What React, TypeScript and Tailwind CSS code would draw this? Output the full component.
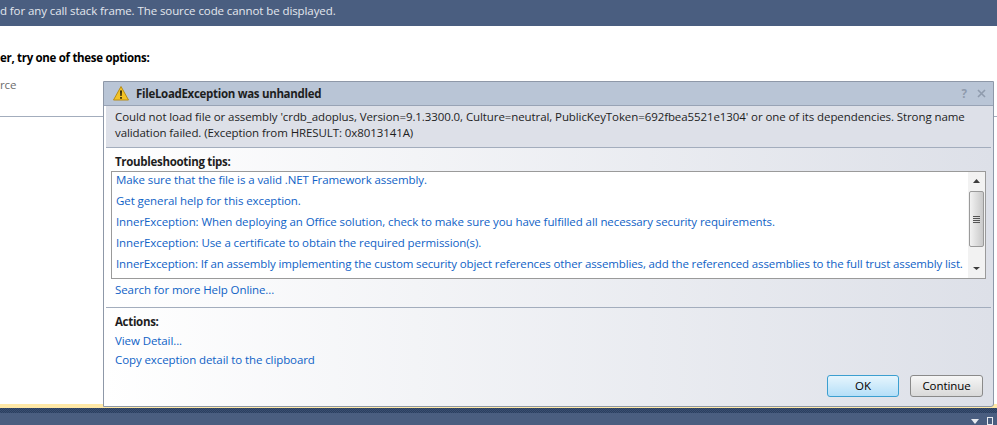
const linkClass = 'block text-[#0f62c6] leading-[16px]'
const boldClass = 'font-bold tracking-[-0.31px]'

const tips = [
  { text: 'Make sure that the file is a valid .NET Framework assembly.', tight: false },
  { text: 'Get general help for this exception.', tight: false },
  { text: 'InnerException: When deploying an Office solution, check to make sure you have fulfilled all necessary security requirements.', tight: false },
  { text: 'InnerException: Use a certificate to obtain the required permission(s).', tight: false },
  { text: 'InnerException: If an assembly implementing the custom security object references other assemblies, add the referenced assemblies to the full trust assembly list.', tight: true },
]

function WarningIcon() {
  return (
    <svg width="16" height="15" viewBox="0 0 16 15">
      <path d="M8 .5 L15.5 14 H.5 Z" fill="#f3c326" stroke="#b88c14" strokeWidth="1" strokeLinejoin="round" />
      <path d="M7 4.5 H9 L8.6 10 H7.4 Z" fill="#2a2208" />
      <rect x="7.2" y="11" width="1.6" height="1.8" fill="#2a2208" />
    </svg>
  )
}

function ScrollBar() {
  return (
    <div className="w-[17px] shrink-0 flex flex-col items-center bg-[#f2f2f2]">
      <svg width="7" height="4" viewBox="0 0 7 4" className="mt-[7px]">
        <path d="M3.5 0 L7 4 H0 Z" fill="#3c3c3c" />
      </svg>
      <div className="w-[15px] h-[56px] mt-[8px] border border-[#9a9a9a] rounded-[2px] bg-gradient-to-r from-[#f2f2f2] to-[#c9c9c9] flex flex-col items-center justify-center gap-[1px]">
        <div className="w-[7px] h-[1px] bg-[#555]" />
        <div className="w-[7px] h-[1px] bg-[#555]" />
        <div className="w-[7px] h-[1px] bg-[#555]" />
        <div className="w-[7px] h-[1px] bg-[#555]" />
      </div>
      <svg width="7" height="3" viewBox="0 0 7 3" className="mt-auto mb-[8px]">
        <path d="M0 0 H7 L3.5 3 Z" fill="#3c3c3c" />
      </svg>
    </div>
  )
}

export default function App() {
  return (
    <div className="w-[997px] h-[425px] relative overflow-hidden flex flex-col bg-white text-[11.5px] tracking-[-0.09px]" style={{ fontFamily: '"Open Sans", "Noto Sans", sans-serif' }}>
      {/* debugger info bar */}
      <div className="h-[26px] shrink-0 bg-[#4a5e80] text-[#e3e7ee] leading-[22px] whitespace-nowrap">
        d for any call stack frame. The source code cannot be displayed.
      </div>

      <div className="flex-1 flex flex-col">
        <div className="h-[91px] border-b border-[#a3adbd]">
          <div className={`mt-[24px] ${boldClass} text-black leading-[16px]`}>er, try one of these options:</div>
          <div className="mt-[11px] text-[#6d6d6d] leading-[16px]">rce</div>
        </div>
        <div className="flex-1" />
        <div className="h-[4px] bg-[#ffe8a6]" />
      </div>

      <div className="h-[5px] shrink-0 bg-[conic-gradient(#2b3f5f_25%,#3a4f72_0_50%,#2b3f5f_0_75%,#3a4f72_0)] bg-[length:2px_2px]" />
      <div className="h-[12px] shrink-0 bg-[#4a5e80] flex justify-end items-start gap-[8px] pr-[4px]">
        <svg width="8" height="5" viewBox="0 0 8 5" className="mt-[6px]">
          <path d="M0 0 H8 L4 5 Z" fill="#e8ebf0" />
        </svg>
        <div className="w-[6px] h-[8px] mt-[4px] border border-[#e8ebf0]" />
      </div>

      {/* exception helper dialog */}
      <div className="absolute left-[103px] top-[81px] w-[891px] h-[326px] border border-[#8e98a8] rounded-br-[3px] flex flex-col bg-gradient-to-r from-white to-[#dde0e8]">
        <div className="h-[24px] shrink-0 bg-[#b9c5d6] border-b border-[#98a3b5] flex items-center pl-[9px] pr-[6px]">
          <WarningIcon />
          <span className={`ml-[7px] ${boldClass} text-[#1e1e1e]`}>FileLoadException was unhandled</span>
          <span className="ml-auto text-[#8f9bad] font-bold leading-none">?</span>
          <svg width="9" height="9" viewBox="0 0 9 9" className="ml-[10px] mr-[1px]">
            <path d="M1 1 L8 8 M8 1 L1 8" stroke="#8f9bad" strokeWidth="1.6" />
          </svg>
        </div>

        <div className="h-[42px] shrink-0 mx-[2px] bg-[#dde0e8] border-b border-[#a3adbd] pl-[9px] pr-[20px] pt-[3px] leading-[16px] text-[#1e1e1e]">
          Could not load file or assembly 'crdb_adoplus, Version=9.1.3300.0, Culture=neutral, PublicKeyToken=692fbea5521e1304' or one of its dependencies. Strong name validation failed. (Exception from HRESULT: 0x8013141A)
        </div>

        <div className="flex-1 flex flex-col min-h-0">
          <div className="pl-[11px] pr-[7px]">
            <div className={`mt-[6px] ${boldClass} text-[#1e1e1e] leading-[16px]`}>Troubleshooting tips:</div>
            <div className="mt-[1px] -ml-[4px] h-[108px] border border-[#9a9a9a] bg-white flex">
              <div className="flex-1 min-w-0 pl-[4px] whitespace-nowrap">
                {tips.map((t) => (
                  <a key={t.text} className={`${linkClass} h-[21px] ${t.tight ? 'tracking-[-0.13px]' : ''}`}>{t.text}</a>
                ))}
              </div>
              <ScrollBar />
            </div>
            <a className={`${linkClass} mt-[3px]`}>Search for more Help Online...</a>
          </div>

          <div className="mt-[9px] mx-[2px] border-t border-[#a3adbd] pl-[9px] pt-[6px]">
            <div className={`${boldClass} text-[#1e1e1e] leading-[16px]`}>Actions:</div>
            <a className={`${linkClass} mt-[3px]`}>View Detail...</a>
            <a className={`${linkClass} mt-[3px]`}>Copy exception detail to the clipboard</a>
          </div>

          <div className="mt-auto flex justify-end gap-[11px] pr-[10px] pb-[9px]">
            <button className="w-[72px] h-[22px] rounded-[3px] border border-[#3c9fd0] bg-gradient-to-b from-[#e6f5fd] to-[#b5dff8] text-black leading-none">OK</button>
            <button className="w-[73px] h-[22px] rounded-[3px] border border-[#8a8a8a] bg-gradient-to-b from-[#f6f6f6] to-[#d9d9d9] text-black leading-none">Continue</button>
          </div>
        </div>
      </div>
    </div>
  )
}
